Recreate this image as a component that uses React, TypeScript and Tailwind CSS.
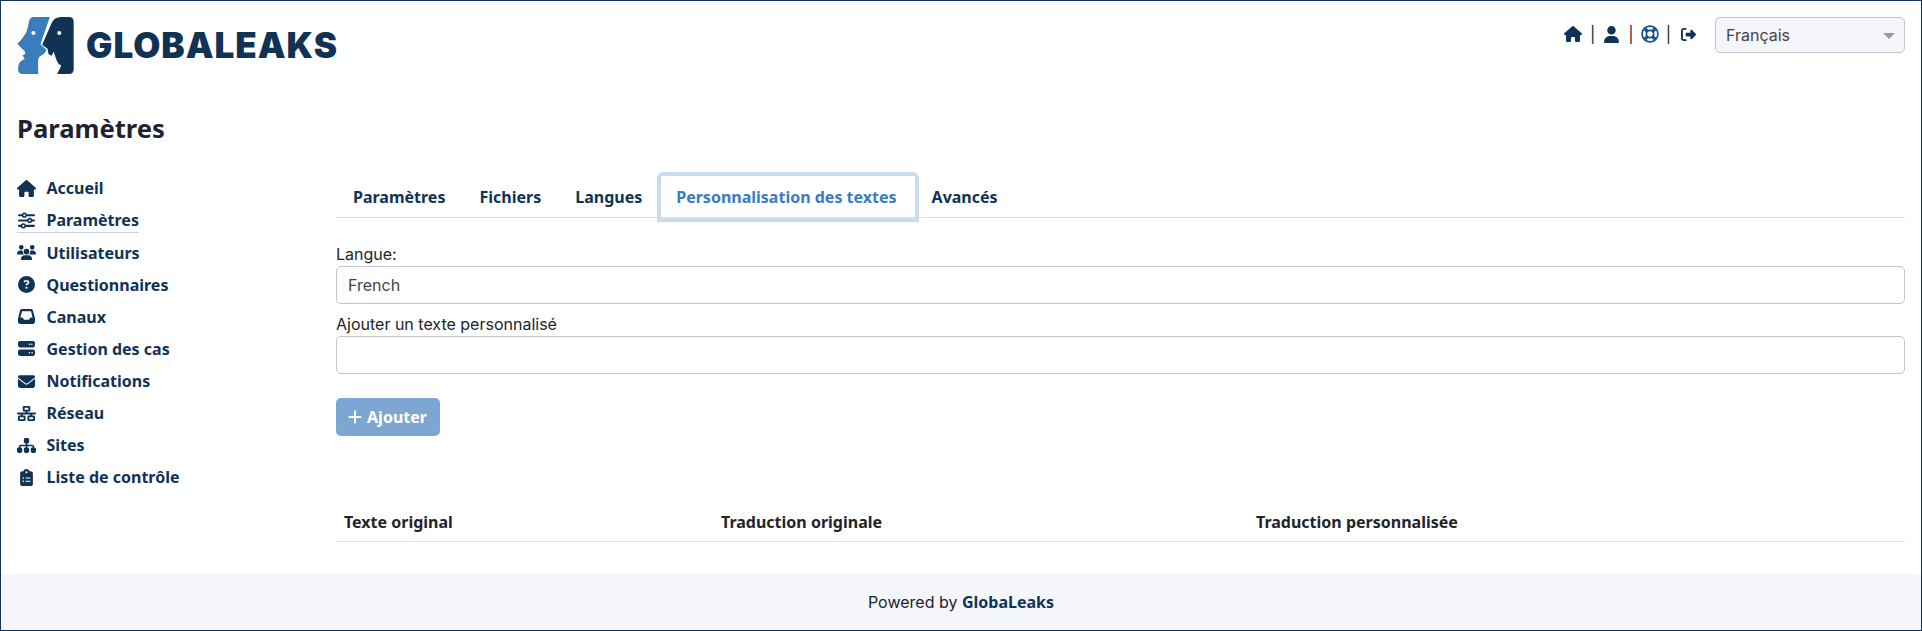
import { FaRegLifeRing } from 'react-icons/fa';
import { FaHouse, FaUser, FaRightFromBracket, FaSliders, FaUsers, FaCircleQuestion, FaInbox, FaServer, FaEnvelope, FaNetworkWired, FaSitemap, FaClipboardList, FaPlus } from 'react-icons/fa6';

const menuItems = [
  { label: 'Accueil', icon: FaHouse },
  { label: 'Paramètres', icon: FaSliders, active: true },
  { label: 'Utilisateurs', icon: FaUsers },
  { label: 'Questionnaires', icon: FaCircleQuestion },
  { label: 'Canaux', icon: FaInbox },
  { label: 'Gestion des cas', icon: FaServer },
  { label: 'Notifications', icon: FaEnvelope },
  { label: 'Réseau', icon: FaNetworkWired },
  { label: 'Sites', icon: FaSitemap },
  { label: 'Liste de contrôle', icon: FaClipboardList },
];

const tabs = ['Paramètres', 'Fichiers', 'Langues', 'Personnalisation des textes', 'Avancés'];

function Logo() {
  return (
    <svg viewBox="15 15 170 170" className="w-[57px] h-[57px] shrink-0">
      <path
        fill="#3a7dbd"
        d="M113 15 L66 15 Q54 15 51 27 Q47 50 42 62 Q32 80 16 95 L30 110 Q40 116 40 124 Q34 130 31 129 L38 140 Q24 146 21 154 Q18 162 18 172 Q20 185 32 185 L78 185 L78 146 Q78 134 88 130 Q98 126 103 113 L85 96 Z"
      />
      <path
        fill="#103355"
        d="M146 15 L170 15 Q184 15 184 29 L184 171 Q184 185 170 185 L135 185 L147 160 Q136 154 134 146 L124 118 L119 130 Q108 128 108 120 L106 110 L90 98 L118 34 Q126 15 146 15 Z"
      />
      <circle cx="64" cy="63" r="6" fill="#ffffff" />
      <circle cx="141" cy="63" r="6" fill="#ffffff" />
    </svg>
  );
}

export default function App() {
  return (
    <div className="h-[631px] border border-[#103355] bg-white flex flex-col font-['Inter',sans-serif] text-[16px] text-[#212529] overflow-hidden">
      <div className="flex-1 px-4">
        {/* Header */}
        <div className="flex justify-between pt-4">
          <div className="flex items-center gap-[12px]">
            <Logo />
            <span className="font-['Inter',sans-serif] font-black text-[35px] leading-none tracking-[1px] text-[#103355]">GLOBALEAKS</span>
          </div>
          <div className="flex items-start">
            <div className="flex items-center gap-[8px] h-[34px] mr-[18px] text-[#103355]">
              <FaHouse className="w-[18px] h-[16px]" />
              <span className="text-[#212529]">|</span>
              <FaUser className="w-[15px] h-[17px] ml-[1px]" />
              <span className="text-[#212529] ml-[1px]">|</span>
              <FaRegLifeRing className="w-[18px] h-[18px] text-[#1d5288] -mx-[1px]" />
              <span className="text-[#212529]">|</span>
              <FaRightFromBracket className="w-[17px] h-[15px] ml-[1px]" />
            </div>
            <div className="relative w-[190px]">
              <select className="w-full h-[36px] appearance-none rounded-[5px] border border-[#c4c4c4] bg-[#f4f6fb] pl-[10px] text-[16px] text-[#444444] outline-none">
                <option>Français</option>
              </select>
              <span className="absolute right-[10px] top-[16px] w-0 h-0 border-x-[6px] border-x-transparent border-t-[6px] border-t-[#999999]" />
            </div>
          </div>
        </div>

        <h1 className="font-['Noto_Sans',sans-serif] font-bold text-[25.6px] leading-[36px] text-[#1f2330] mt-[37px]">Paramètres</h1>

        <div className="flex mt-[25px]">
          {/* Sidebar */}
          <nav className="w-[319px] shrink-0 flex flex-col pt-[0.4px]">
            {menuItems.map(item => {
              const Icon = item.icon;
              return (
                <div key={item.label} className="h-[32.1px] flex items-center">
                  <div className={`flex items-center h-[24px] font-['Noto_Sans',sans-serif] font-bold text-[16px] text-[#103355] ${item.active ? 'border-b border-[#c9d3e6]' : ''}`}>
                    <span className="w-[29.5px] flex items-center">
                      <Icon className="w-[19px] h-[17px]" />
                    </span>
                    {item.label}
                  </div>
                </div>
              );
            })}
          </nav>

          {/* Content */}
          <main className="flex-1 min-w-0 pt-[1px]">
            <div className="flex h-[45px] border-b border-[#dee2e6]">
              {tabs.map(tab => {
                const active = tab === 'Personnalisation des textes';
                return (
                  <div
                    key={tab}
                    className={`flex items-center font-['Noto_Sans',sans-serif] font-bold text-[16px] ${active ? 'h-[50px] -mt-[1px] -ml-[2px] -mr-[4px] text-[#3a7dbd] border-4 border-[#c9dbee] rounded-t-[6px] pl-[15px] pr-[18px]' : 'h-[48px] px-[17px] text-[#103355]'}`}
                  >
                    {tab}
                  </div>
                );
              })}
            </div>

            <label className="block mt-[25px] leading-[23px]">Langue:</label>
            <input readOnly value="French" className="block w-full h-[38px] rounded-[5px] border border-[#c4c4c4] px-[11px] text-[16px] text-[#444444] outline-none" />
            <label className="block mt-[9px] leading-[23px]">Ajouter un texte personnalisé</label>
            <input readOnly className="block w-full h-[38px] rounded-[5px] border border-[#c4c4c4] px-[11px] outline-none" />

            <button className="mt-[24px] h-[38px] w-[104px] rounded-[5px] bg-[#7ea6d3] text-white flex items-center justify-center gap-[4px] font-['Noto_Sans',sans-serif] font-bold text-[16px]">
              <FaPlus className="w-[16px] h-[16px] -ml-[2px]" />
              Ajouter
            </button>

            <div className="mt-[67px] flex items-center h-[39px] border-b border-[#dee2e6] px-2 font-['Noto_Sans',sans-serif] font-bold text-[16px] text-[#212529]">
              <span className="w-[377px]">Texte original</span>
              <span className="w-[535px]">Traduction originale</span>
              <span>Traduction personnalisée</span>
            </div>
          </main>
        </div>
      </div>

      <footer className="h-[56px] shrink-0 bg-[#f4f6fb] flex items-center justify-center">
        <span>Powered by <span className="font-['Noto_Sans',sans-serif] font-bold text-[#103355]">GlobaLeaks</span></span>
      </footer>
    </div>
  );
}
